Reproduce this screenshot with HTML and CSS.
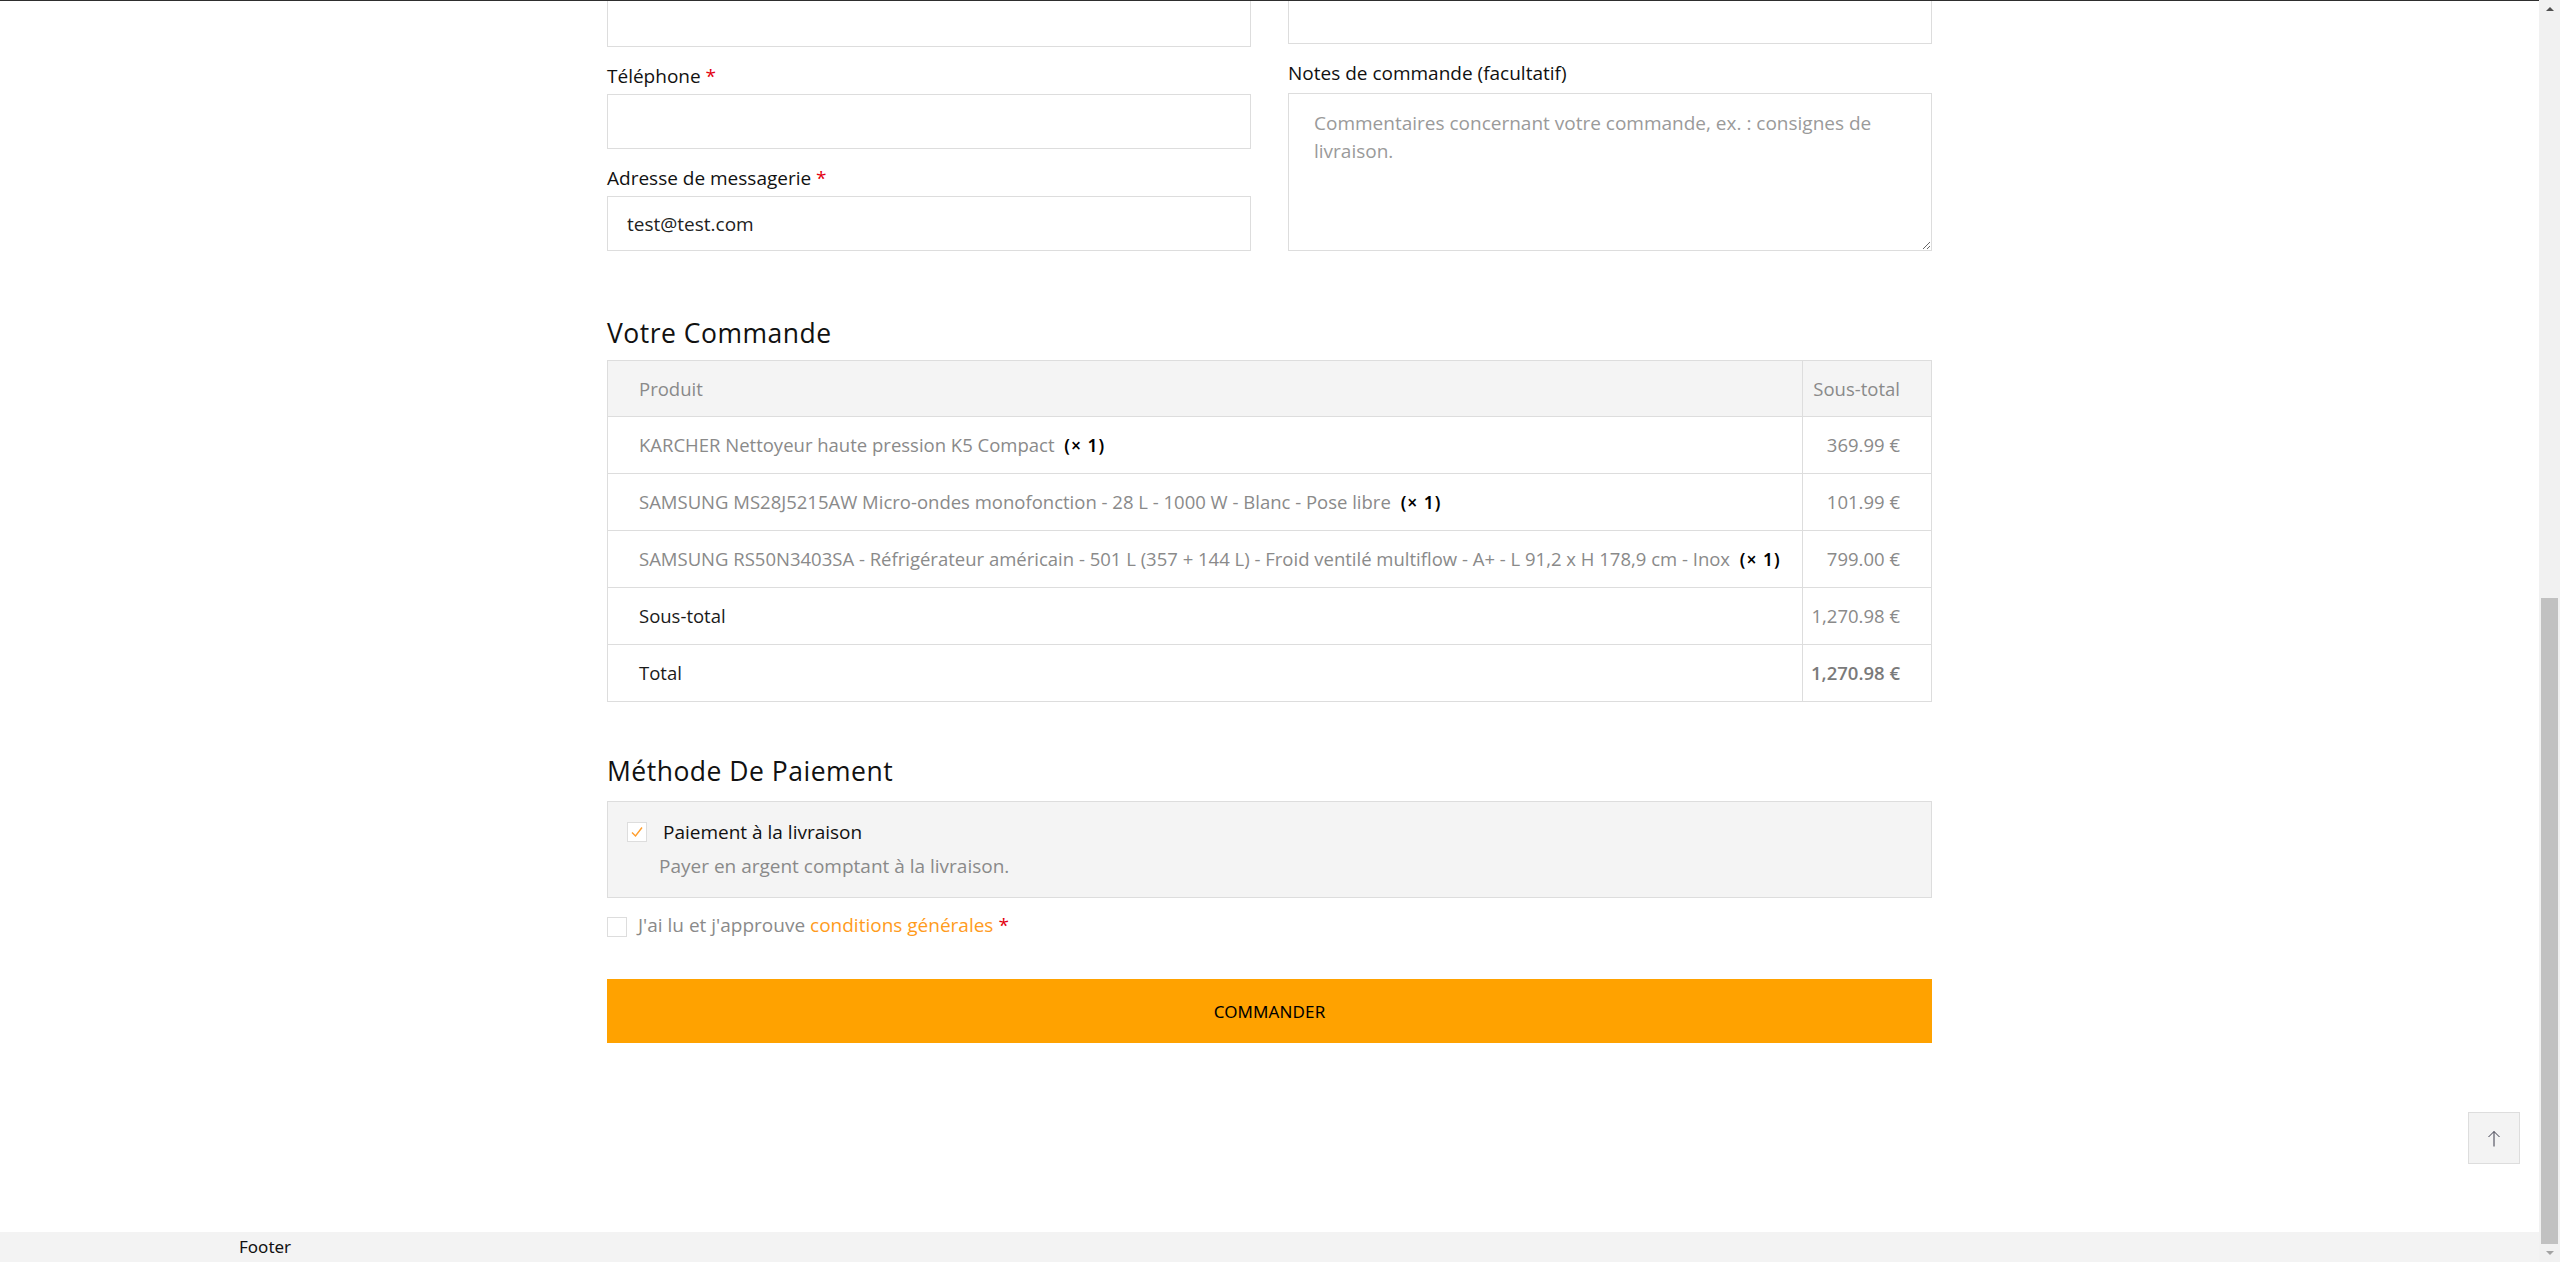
FILE: index.html
```html
<!DOCTYPE html>
<html lang="fr">
<head>
<meta charset="utf-8">
<title>Commande</title>
<link rel="stylesheet" href="styles.css">
</head>
<body>
<div class="viewport">
  <div class="page">
    <main class="checkout">
      <div class="fields">
        <div class="col">
          <div class="cut-input cut-left"></div>
          <div class="field">
            <label class="field-label">Téléphone <span class="req">*</span></label>
            <input class="text-input" type="tel">
          </div>
          <div class="field">
            <label class="field-label">Adresse de messagerie <span class="req">*</span></label>
            <input class="text-input" type="email" value="test@test.com">
          </div>
        </div>
        <div class="col">
          <div class="cut-input cut-right"></div>
          <div class="field field-notes">
            <label class="field-label">Notes de commande (facultatif)</label>
            <textarea class="notes" placeholder="Commentaires concernant votre commande, ex. : consignes de&#10;livraison."></textarea>
          </div>
        </div>
      </div>

      <h3 class="section-title title-order">Votre Commande</h3>
      <table class="order-table">
        <colgroup><col class="c-product"><col class="c-total"></colgroup>
        <thead>
          <tr><th class="cell-product">Produit</th><th class="cell-total">Sous-total</th></tr>
        </thead>
        <tbody>
          <tr><td class="cell-product">KARCHER Nettoyeur haute pression K5 Compact <strong class="qty">(× 1)</strong></td><td class="cell-total">369.99 €</td></tr>
          <tr><td class="cell-product">SAMSUNG MS28J5215AW Micro-ondes monofonction - 28 L - 1000 W - Blanc - Pose libre <strong class="qty">(× 1)</strong></td><td class="cell-total">101.99 €</td></tr>
          <tr><td class="cell-product">SAMSUNG RS50N3403SA - Réfrigérateur américain - 501 L (357 + 144 L) - Froid ventilé multiflow - A+ - L 91,2 x H 178,9 cm - Inox <strong class="qty">(× 1)</strong></td><td class="cell-total">799.00 €</td></tr>
        </tbody>
        <tfoot>
          <tr><th class="cell-product row-label">Sous-total</th><td class="cell-total">1,270.98 €</td></tr>
          <tr><th class="cell-product row-label">Total</th><td class="cell-total grand">1,270.98 €</td></tr>
        </tfoot>
      </table>

      <h3 class="section-title title-pay">Méthode De Paiement</h3>
      <div class="payment-box">
        <div class="pay-option">
          <span class="check-box checked">
            <svg width="20" height="20" viewBox="0 0 20 20"><polyline points="5,10.5 8.5,14 15,5.5" fill="none" stroke="#ff9d2b" stroke-width="1.4"/></svg>
          </span>
          <span class="pay-name">Paiement à la livraison</span>
        </div>
        <p class="pay-desc">Payer en argent comptant à la livraison.</p>
      </div>

      <div class="terms">
        <span class="check-box"></span>
        <span class="terms-text">J'ai lu et j'approuve <a class="terms-link" href="#">conditions générales</a> <span class="req">*</span></span>
      </div>

      <button class="order-btn" type="button">COMMANDER</button>
    </main>

    <footer class="site-footer">
      <div class="footer-inner">Footer</div>
    </footer>

    <button class="to-top" type="button" aria-label="Haut de page">
      <svg width="14" height="17" viewBox="0 0 14 17"><path d="M7 1.5 V16.5 M1.5 7 L7 1.5 L12.5 7" fill="none" stroke="#3a3a4a" stroke-width="1"/></svg>
    </button>
  </div>

  <div class="scrollbar">
    <div class="sb-btn"><span class="sb-arrow-up"></span></div>
    <div class="sb-track"><div class="sb-thumb"></div></div>
    <div class="sb-btn sb-btn-down"><span class="sb-arrow-down"></span></div>
  </div>
</div>
</body>
</html>
```

FILE: styles.css
```css
* { box-sizing: border-box; }

body {
  margin: 0;
  font-family: "Open Sans", "Noto Sans", sans-serif;
  color: #111;
  background: #fff;
}

.viewport {
  display: flex;
  height: 1262px;
  overflow: hidden;
}

.page {
  flex: 1;
  display: flex;
  flex-direction: column;
  position: relative;
  border-top: 1px solid #2e2e2e;
  min-width: 0;
}

.checkout {
  width: 1325px;
  margin: 0 auto;
}

.fields {
  display: grid;
  grid-template-columns: 644px 644px;
  column-gap: 37px;
  align-items: start;
}

.col {
  display: flex;
  flex-direction: column;
}

.cut-input {
  border: 1px solid #ddd;
  border-top: 0;
}
.cut-left { height: 46px; }
.cut-right { height: 43px; }

.field { margin-top: 17px; }

.field-label {
  display: block;
  font-size: 19px;
  line-height: 24px;
  margin-bottom: 6px;
  color: #111;
}
.field-notes .field-label { margin-bottom: 8px; }

.req { color: #e3000f; }

.text-input {
  display: block;
  width: 100%;
  height: 55px;
  border: 1px solid #ddd;
  padding: 0 19px;
  font-family: inherit;
  font-size: 19px;
  color: #222;
  background: #fff;
  outline: none;
}

.notes {
  display: block;
  width: 100%;
  height: 158px;
  border: 1px solid #ddd;
  padding: 15px 25px;
  font-family: inherit;
  font-size: 19px;
  line-height: 28px;
  color: #222;
  background: #fff;
  outline: none;
  resize: vertical;
}
.notes::placeholder { color: #9a9a9a; opacity: 1; }

.section-title {
  font-size: 26.5px;
  font-weight: 500;
  line-height: 32px;
  color: #111;
  letter-spacing: 0.5px;
}
.title-order { margin: 66px 0 11px; }
.title-pay { margin: 53px 0 14px; }

.order-table {
  width: 100%;
  table-layout: fixed;
  border-collapse: separate;
  border-spacing: 0;
  border-top: 1px solid #ddd;
  border-left: 1px solid #ddd;
  font-size: 18.5px;
}
.c-total { width: 129px; }

.order-table th,
.order-table td {
  height: 57px;
  border-right: 1px solid #ddd;
  border-bottom: 1px solid #ddd;
  vertical-align: middle;
  font-weight: 400;
  line-height: 24px;
  color: #8a8a8a;
  white-space: nowrap;
}
.order-table thead th {
  height: 56px;
  background: #f4f4f4;
}

.cell-product {
  text-align: left;
  padding: 0 10px 0 31px;
}
.cell-total {
  text-align: right;
  padding: 0 31px 0 0;
}

.order-table .row-label { color: #1a1a1a; }
.order-table .grand { font-weight: 600; color: #7a7a7a; }

.qty {
  font-family: "Noto Sans", sans-serif;
  font-weight: 600;
  font-size: 17.5px;
  letter-spacing: 1px;
  color: #000;
  margin-left: 5px;
}

.payment-box {
  border: 1px solid #ddd;
  background: #f4f4f4;
  padding: 18px 19px 19px;
}

.pay-option {
  display: flex;
  align-items: center;
  gap: 16px;
}

.check-box {
  flex: none;
  width: 20px;
  height: 20px;
  border: 1px solid #ddd;
  background: #fff;
  display: flex;
  align-items: center;
  justify-content: center;
}
.check-box svg { display: block; margin: -1px; }

.pay-name {
  font-size: 19px;
  line-height: 24px;
  color: #111;
}

.pay-desc {
  margin: 10px 0 0 32px;
  font-size: 19px;
  line-height: 24px;
  color: #8a8a8a;
}

.terms {
  margin-top: 19px;
  display: flex;
  align-items: center;
  gap: 11px;
}
.terms-text {
  font-size: 19px;
  line-height: 20px;
  color: #8a8a8a;
  position: relative;
  top: -2px;
}
.terms-link {
  color: #ff9b1c;
  text-decoration: none;
}

.order-btn {
  display: block;
  width: 100%;
  height: 64px;
  margin-top: 42px;
  border: 0;
  background: #ffa200;
  color: #000;
  font-family: "Noto Sans", sans-serif;
  font-size: 17px;
  letter-spacing: 0.1px;
}

.site-footer {
  margin-top: auto;
  height: 30px;
  background: #f3f3f3;
}
.footer-inner {
  width: 2061px;
  margin: 0 auto;
  font-family: "Noto Sans", sans-serif;
  font-size: 17px;
  line-height: 30px;
  color: #111;
}

.to-top {
  position: absolute;
  right: 19px;
  bottom: 98px;
  width: 52px;
  height: 52px;
  border: 1px solid #ddd;
  background: #f3f3f3;
  padding: 0;
  display: flex;
  align-items: center;
  justify-content: center;
}

.scrollbar {
  flex: none;
  width: 21px;
  background: #f1f1f1;
  display: flex;
  flex-direction: column;
}
.sb-btn {
  height: 17px;
  display: flex;
  align-items: center;
  justify-content: center;
}
.sb-btn-down { height: 18px; }
.sb-arrow-up {
  width: 0;
  height: 0;
  border-left: 4.5px solid transparent;
  border-right: 4.5px solid transparent;
  border-bottom: 4.5px solid #505050;
}
.sb-arrow-down {
  width: 0;
  height: 0;
  border-left: 4.5px solid transparent;
  border-right: 4.5px solid transparent;
  border-top: 4.5px solid #a3a3a3;
}
.sb-track {
  flex: 1;
  display: flex;
  flex-direction: column;
  justify-content: flex-end;
  padding: 0 2px;
}
.sb-thumb {
  height: 646px;
  background: #c1c1c1;
}
```
